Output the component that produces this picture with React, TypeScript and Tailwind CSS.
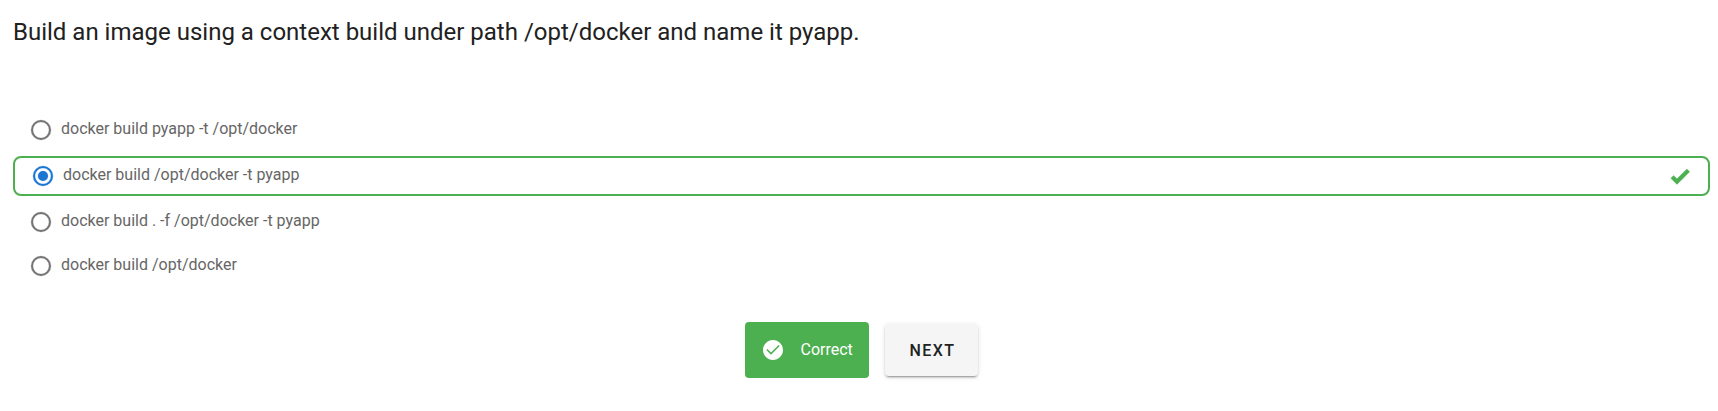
const options = [
  { text: "docker build pyapp -t /opt/docker", selected: false },
  { text: "docker build /opt/docker -t pyapp", selected: true },
  { text: "docker build . -f /opt/docker -t pyapp", selected: false },
  { text: "docker build /opt/docker", selected: false },
];

function Icon({ path, className = "" }: { path: string; className?: string }) {
  return (
    <svg viewBox="0 0 24 24" fill="currentColor" className={`size-6 shrink-0 ${className}`}>
      <path d={path} />
    </svg>
  );
}

const RADIO_OFF =
  "M12,20A8,8 0 0,1 4,12A8,8 0 0,1 12,4A8,8 0 0,1 20,12A8,8 0 0,1 12,20M12,2A10,10 0 0,0 2,12A10,10 0 0,0 12,22A10,10 0 0,0 22,12A10,10 0 0,0 12,2Z";
const RADIO_ON = RADIO_OFF + "M12,7A5,5 0 0,0 7,12A5,5 0 0,0 12,17A5,5 0 0,0 17,12A5,5 0 0,0 12,7Z";
const CHECK_BOLD = "M9,20.42L2.79,14.21L5.62,11.38L9,14.77L18.88,4.88L21.71,7.71L9,20.42Z";
const CHECK_CIRCLE =
  "M12 2C6.5 2 2 6.5 2 12S6.5 22 12 22 22 17.5 22 12 17.5 2 12 2M10 16.7L5.3 12L6.4 10.9L10 14.5L17.6 6.9L18.7 8L10 16.7Z";

function Option({ text, selected }: { text: string; selected: boolean }) {
  return (
    <label
      className={
        selected
          ? "flex h-10 items-center rounded-lg border-2 border-[#4caf50] px-4"
          : "flex h-9 items-center px-4"
      }
    >
      <Icon
        path={selected ? RADIO_ON : RADIO_OFF}
        className={selected ? "stroke-current stroke-[0.2] text-[#1976d2]" : "stroke-current stroke-[0.2] text-[#757575]"}
      />
      <span className="ml-2 pb-[3px] text-base leading-5 text-[#666666]">{text}</span>
      {selected && <Icon path={CHECK_BOLD} className="ml-auto stroke-current stroke-[0.3] text-[#4caf50]" />}
    </label>
  );
}

export default function App() {
  return (
    <main className="min-h-[411px] bg-white pt-4 pr-2 pl-[13px] font-['Roboto',sans-serif] text-[#212121]">
      <h1 className="h-24 text-2xl leading-8">Build an image using a context build under path /opt/docker and name it pyapp.</h1>
      <div className="flex flex-col gap-2">
        {options.map((o) => (
          <Option key={o.text} {...o} />
        ))}
      </div>
      <div className="mt-[38px] flex items-center justify-center gap-4">
        <div className="flex h-14 w-[124px] items-center rounded bg-[#4caf50] pl-[15.5px] text-white">
          <Icon path={CHECK_CIRCLE} />
          <span className="ml-4 text-base leading-6">Correct</span>
        </div>
        <button className="h-[52px] w-[93px] rounded bg-[#f5f5f5] pt-0.5 pl-0.5 text-base font-medium tracking-[1.43px] shadow-[0_3px_1px_-2px_rgba(0,0,0,0.2),0_2px_2px_0_rgba(0,0,0,0.14),0_1px_5px_0_rgba(0,0,0,0.12)]">
          NEXT
        </button>
      </div>
    </main>
  );
}
